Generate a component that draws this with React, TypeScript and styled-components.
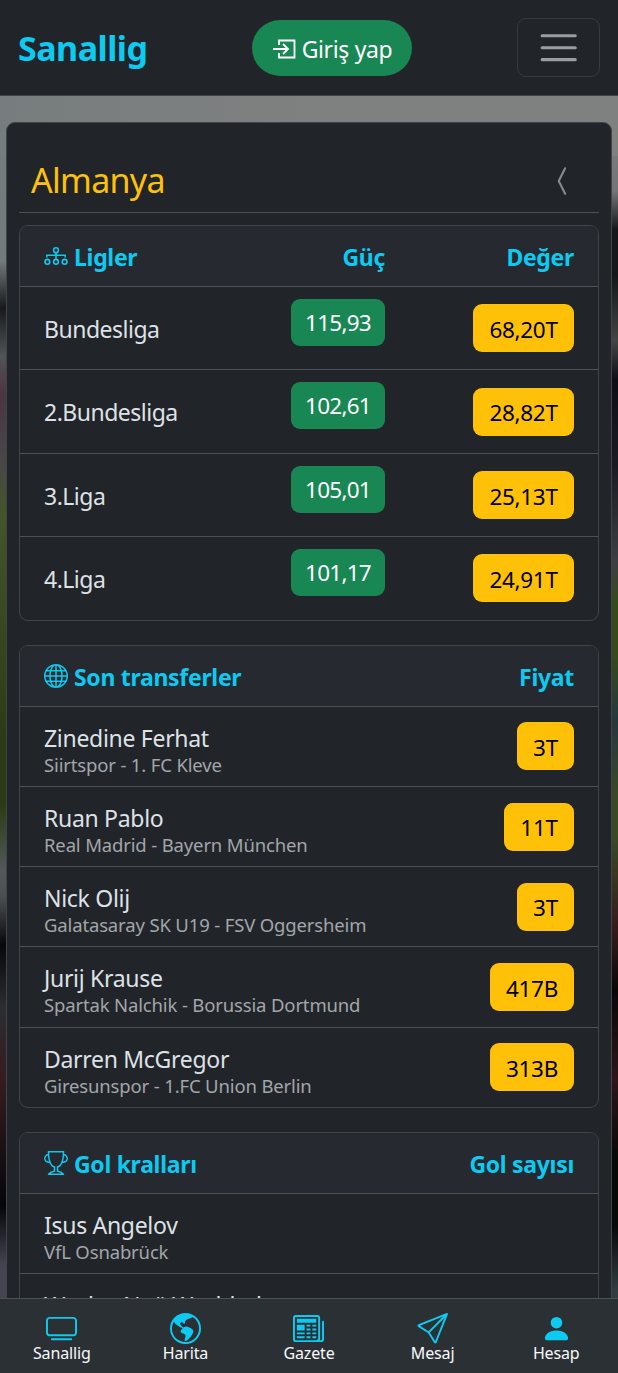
import React from "react";
import styled, { createGlobalStyle } from "styled-components";
import { BsGlobe, BsTrophy, BsTv, BsGlobeAmericas, BsNewspaper, BsSend, BsPersonFill, BsChevronCompactLeft } from "react-icons/bs";

const Global = createGlobalStyle`
  * { box-sizing: border-box; }
  html, body { margin: 0; height: 1373px; overflow: hidden; }
  body { font-family: "Noto Sans", "Open Sans", sans-serif; color: #dee2e6; background: #212529; }
`;

const Page = styled.div`
  height: 1373px;
  display: flex;
  flex-direction: column;
  overflow: hidden;
  background: #212529;
`;

const TopBar = styled.header`
  flex: none;
  height: 96px;
  padding: 0 18px;
  display: grid;
  grid-template-columns: 234px 160px 1fr;
  align-items: center;
  background: #212529;
  border-bottom: 1px solid #414549;
`;

const Brand = styled.span`
  color: #0dcaf0;
  font-size: 34px;
  font-weight: 700;
  line-height: 50px;
  letter-spacing: -0.5px;
`;

const LoginButton = styled.button`
  height: 56px;
  width: 160px;
  padding: 2px 0 0;
  border: 0;
  border-radius: 28px;
  display: flex;
  align-items: center;
  justify-content: center;
  gap: 6px;
  color: #fff;
  background: #198754;
  font-family: inherit;
  font-size: 23px;
  letter-spacing: -0.35px;
  white-space: nowrap;
`;

const MenuButton = styled.button`
  justify-self: end;
  width: 83px;
  height: 59px;
  padding: 0;
  border: 1px solid #373b3f;
  border-radius: 9px;
  background: transparent;
  display: grid;
  place-items: center;
`;

const Backdrop = styled.main`
  flex: 1;
  min-height: 0;
  padding: 26px 6px 0;
  overflow: hidden;
  background:
    linear-gradient(90deg, #777d7e 0, #7f8080 50%, #7f8080 100%) 0 0 / 100% 60px no-repeat,
    linear-gradient(180deg, #777d7e 0, #747a7b 165px, #17191b 212px, #515455 260px, #4a3540 298px, #4a4549 359px, #43552b 420px, #2e3a17 640px, #2e3a17 710px, #53585a 775px, #4c4f50 800px, #08080b 849px, #2b2d30 911px, #351c20 985px, #05060a 1110px, #474451 1170px, #474451 1202px) 0 0 / 50% 100% no-repeat,
    linear-gradient(180deg, #7f8080 0, #747576 95px, #17171a 134px, #17171a 180px, #434444 245px, #0d0e16 285px, #1b1b23 370px, #3f3d44 464px, #344b1c 510px, #344b1c 560px, #26373f 625px, #3b4927 700px, #3b4927 740px, #341b1b 835px, #080808 894px, #2d1717 985px, #090909 1060px, #090909 1130px, #303e43 1195px) 100% 0 / 50% 100% no-repeat;
`;

const Panel = styled.section`
  height: 1300px;
  border: 1px solid #414549;
  border-radius: 9px;
  background: #212529;
  padding: 0 12px;
`;

const PanelHeading = styled.div`
  height: 90px;
  margin-bottom: 12px;
  padding: 25px 12px 0;
  border-bottom: 1px solid #4d5155;
  display: flex;
  justify-content: space-between;
`;

const Country = styled.h1`
  margin: 0;
  color: #ffc107;
  font-size: 34px;
  font-weight: 400;
  line-height: 64px;
  letter-spacing: -0.7px;
`;

const BackIcon = styled(BsChevronCompactLeft)`
  width: 34px;
  height: 34px;
  margin: 16px 7px 0 0;
  color: #858a8f;
`;

const Card = styled.article`
  border: 1px solid #414549;
  border-radius: 9px;
  margin-bottom: 24px;
  overflow: hidden;
`;

const CardHeader = styled.header<{ $three?: boolean }>`
  height: 60px;
  padding: 2px 24px 0;
  display: grid;
  grid-template-columns: ${(p) => (p.$three ? "1fr 100px 189px" : "1fr auto")};
  align-items: center;
  text-align: right;
  color: #0dcaf0;
  background: #272930;
  font-size: 23px;
  font-weight: 700;
  letter-spacing: -0.3px;
`;

const Caption = styled.div`
  display: flex;
  align-items: center;
  gap: 6px;
  svg { width: 24px; height: 24px; flex: none; margin-top: -2px; }
`;

const LeagueRow = styled.div`
  height: 83.4px;
  padding: 0 24px;
  border-top: 1px solid #4d5155;
  display: grid;
  grid-template-columns: 1fr 100px 189px;
  align-items: start;
  justify-items: end;
`;

const LeagueName = styled.span`
  justify-self: start;
  font-size: 23px;
  line-height: 36px;
  letter-spacing: -0.5px;
  margin-top: 24px;
`;

const Badge = styled.span<{ $tone: "green" | "yellow"; $top: number; $width?: number }>`
  height: ${(p) => (p.$tone === "green" ? 47 : 48)}px;
  width: ${(p) => p.$width}px;
  margin-top: ${(p) => p.$top}px;
  padding-top: ${(p) => (p.$tone === "green" ? 0 : 2)}px;
  border-radius: 9px;
  display: flex;
  align-items: center;
  justify-content: center;
  flex: none;
  background: ${(p) => (p.$tone === "green" ? "#198754" : "#ffc107")};
  color: ${(p) => (p.$tone === "green" ? "#fff" : "#000")};
  font-size: 22.5px;
  letter-spacing: ${(p) => (p.$tone === "green" ? -0.75 : -0.3)}px;
`;

const PlayerRow = styled.div`
  height: 80.25px;
  padding: 0 24px;
  border-top: 1px solid #4d5155;
  display: flex;
  align-items: flex-start;
  justify-content: space-between;
`;

const PlayerText = styled.div`
  display: flex;
  flex-direction: column;
  padding-top: 13px;
`;

const PlayerName = styled.span`
  font-size: 23px;
  line-height: 36px;
  letter-spacing: -0.3px;
`;

const Clubs = styled.span`
  margin-top: -4px;
  color: #a3a6aa;
  font-size: 18.5px;
  line-height: 26px;
  letter-spacing: -0.15px;
`;

const BottomBar = styled.nav`
  flex: none;
  height: 75px;
  display: grid;
  grid-template-columns: repeat(5, 1fr);
  background: #2b3035;
  border-top: 1px solid #4d5155;
`;

const Tab = styled.a`
  display: flex;
  flex-direction: column;
  align-items: center;
  padding-top: 14px;
  color: #f8f9fa;
  font-size: 16px;
  line-height: 22px;
  letter-spacing: -0.15px;
  svg { width: 31px; height: 31px; color: #0dcaf0; margin-bottom: -2px; }
`;

const SignInIcon = () => (
  <svg width="24" height="20" viewBox="0 0 24 20" fill="none" stroke="currentColor" strokeWidth="1.8">
    <path d="M7 6V1.5h15.5v17H7V14M1 10h15M11 5l5 5-5 5" />
  </svg>
);

const HierarchyIcon = () => (
  <svg viewBox="0 0 25 25" fill="none" stroke="currentColor" strokeWidth="1.6">
    <circle cx="12.5" cy="6.5" r="2.5" />
    <circle cx="3.5" cy="18.5" r="2.5" />
    <circle cx="12.5" cy="18.5" r="2.5" />
    <circle cx="21.5" cy="18.5" r="2.5" />
    <path d="M12.5 9v6.5M3 14v-2.3h19V14" />
  </svg>
);

const MenuIcon = () => (
  <svg width="46" height="46" viewBox="0 0 30 30" stroke="#9b9da0" strokeWidth="2" strokeLinecap="round">
    <path d="M4 7h21.6M4 14.8h21.6M4 22.6h21.6" />
  </svg>
);

const leagues = [
  ["Bundesliga", "115,93", "68,20T"],
  ["2.Bundesliga", "102,61", "28,82T"],
  ["3.Liga", "105,01", "25,13T"],
  ["4.Liga", "101,17", "24,91T"],
];

const transfers: [string, string, string, number][] = [
  ["Zinedine Ferhat", "Siirtspor - 1. FC Kleve", "3T", 57],
  ["Ruan Pablo", "Real Madrid - Bayern München", "11T", 70],
  ["Nick Olij", "Galatasaray SK U19 - FSV Oggersheim", "3T", 57],
  ["Jurij Krause", "Spartak Nalchik - Borussia Dortmund", "417B", 84],
  ["Darren McGregor", "Giresunspor - 1.FC Union Berlin", "313B", 84],
];

const scorers = [
  ["Isus Angelov", "VfL Osnabrück"],
  ["Wesley Noë Worbled", ""],
];

const tabs = [
  { label: "Sanallig", Icon: BsTv },
  { label: "Harita", Icon: BsGlobeAmericas },
  { label: "Gazete", Icon: BsNewspaper },
  { label: "Mesaj", Icon: BsSend },
  { label: "Hesap", Icon: BsPersonFill },
];

export default function App() {
  return (
    <Page>
      <Global />
      <TopBar>
        <Brand>Sanallig</Brand>
        <LoginButton><SignInIcon />Giriş yap</LoginButton>
        <MenuButton aria-label="Menü"><MenuIcon /></MenuButton>
      </TopBar>
      <Backdrop>
        <Panel>
          <PanelHeading><Country>Almanya</Country><BackIcon /></PanelHeading>
          <Card>
            <CardHeader $three>
              <Caption><HierarchyIcon />Ligler</Caption><span>Güç</span><span>Değer</span>
            </CardHeader>
            {leagues.map(([name, power, value]) => (
              <LeagueRow key={name}>
                <LeagueName>{name}</LeagueName>
                <Badge $tone="green" $top={12} $width={94}>{power}</Badge>
                <Badge $tone="yellow" $top={17.3} $width={101}>{value}</Badge>
              </LeagueRow>
            ))}
          </Card>
          <Card>
            <CardHeader><Caption><BsGlobe />Son transferler</Caption><span>Fiyat</span></CardHeader>
            {transfers.map(([name, clubs, fee, width]) => (
              <PlayerRow key={name}>
                <PlayerText><PlayerName>{name}</PlayerName><Clubs>{clubs}</Clubs></PlayerText>
                <Badge $tone="yellow" $top={15.7} $width={width}>{fee}</Badge>
              </PlayerRow>
            ))}
          </Card>
          <Card>
            <CardHeader><Caption><BsTrophy />Gol kralları</Caption><span>Gol sayısı</span></CardHeader>
            {scorers.map(([name, club]) => (
              <PlayerRow key={name}>
                <PlayerText><PlayerName>{name}</PlayerName><Clubs>{club}</Clubs></PlayerText>
              </PlayerRow>
            ))}
          </Card>
        </Panel>
      </Backdrop>
      <BottomBar>
        {tabs.map(({ label, Icon }) => (
          <Tab key={label}><Icon />{label}</Tab>
        ))}
      </BottomBar>
    </Page>
  );
}
